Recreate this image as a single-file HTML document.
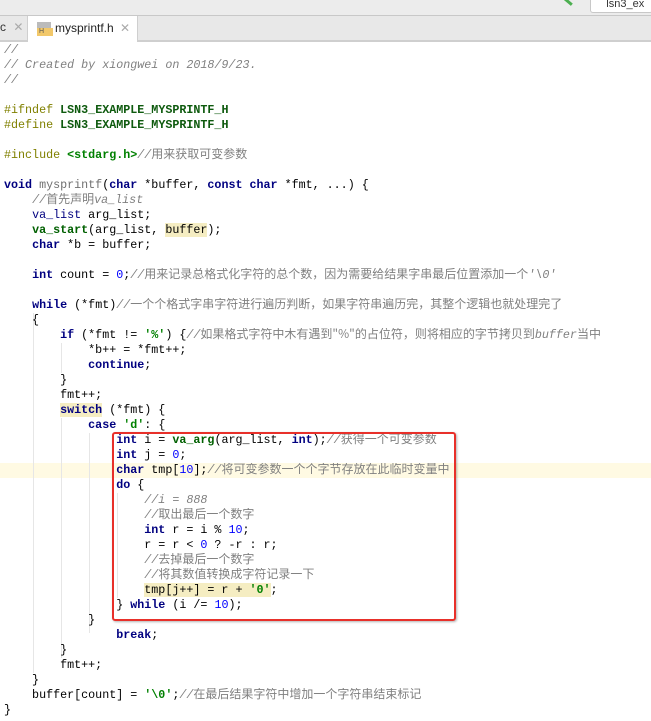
<!DOCTYPE html>
<html><head><meta charset="utf-8"><style>
body{margin:0;width:651px;height:721px;overflow:hidden;background:#fff;position:relative;font-family:"Liberation Mono","Noto Sans CJK SC",monospace;font-size:11.7px;color:#000}
.top{position:absolute;left:0;top:0;width:651px;height:15px;background:#ececec;border-bottom:1px solid #c8c8c8}
.tabs{position:absolute;left:0;top:16px;width:651px;height:24px;background:#e8e8e8;border-bottom:2px solid #cfcfcf}
.tab{position:absolute;top:16px;left:27px;width:109px;height:26px;background:#fff;border-left:1px solid #cfcfcf;border-right:1px solid #cfcfcf;font-family:"Liberation Sans",sans-serif;font-size:12px}
.l{position:absolute;left:4px;height:15px;line-height:15px;white-space:pre;right:0;overflow:hidden}
.k{color:#000080;font-weight:bold}
.c{color:#808080;font-style:italic}
.z{font-family:"Noto Sans CJK SC",sans-serif;font-style:normal;font-size:12px;line-height:0;color:#808080}
.m{color:#0e5a0e;font-weight:bold}
.n{color:#0000ff}
.s{color:#008000;font-weight:bold}
.g{color:#808000}
.hl{background:#f5edc2}
.guide{position:absolute;width:1px;background:#e6e6e6}
</style></head><body>
<div class="top"></div>
<div style="position:absolute;left:590px;top:0;width:61px;height:12px;background:#fff;border:1px solid #c8c8c8;border-top:none;border-radius:0 0 3px 3px;font-family:'Liberation Sans';font-size:11px;line-height:8px;color:#333;overflow:hidden">&nbsp;&nbsp;&nbsp;&nbsp;&nbsp;lsn3_ex</div>
<div style="position:absolute;left:563px;top:0;width:10px;height:3px;background:#4caf50;transform:rotate(40deg)"></div>
<div class="tabs"></div>
<div style="position:absolute;left:0;top:20px;font-family:'Liberation Sans';font-size:12px;color:#333">c <span style="color:#aaa;margin-left:4px">✕</span></div>
<div class="tab"><div style="position:absolute;left:9px;top:6px;width:14px;height:8px;background:#bbb"></div><div style="position:absolute;left:9px;top:12px;width:16px;height:8px;background:#f2c86a;font-size:7px;line-height:8px;color:#555;padding-left:2px;box-sizing:border-box">H</div><span style="position:absolute;left:27px;top:5px;color:#222">mysprintf.h</span><span style="position:absolute;left:92px;top:5px;color:#aaa">✕</span></div>
<div style="position:absolute;left:0;top:463px;width:651px;height:15px;background:#fffae3"></div>
<div class="guide" style="left:33px;top:313px;height:360px"></div>
<div class="guide" style="left:61px;top:343px;height:30px"></div>
<div class="guide" style="left:61px;top:418px;height:240px"></div>
<div class="guide" style="left:89px;top:433px;height:200px"></div>
<div class="guide" style="left:117px;top:493px;height:105px"></div>
<div class="l" style="top:43px"><span class="c">//</span></div>
<div class="l" style="top:58px"><span class="c">// Created by xiongwei on 2018/9/23.</span></div>
<div class="l" style="top:73px"><span class="c">//</span></div>
<div class="l" style="top:103px"><span class="g">#ifndef</span> <span class="m">LSN3_EXAMPLE_MYSPRINTF_H</span></div>
<div class="l" style="top:118px"><span class="g">#define</span> <span class="m">LSN3_EXAMPLE_MYSPRINTF_H</span></div>
<div class="l" style="top:148px"><span class="g">#include</span> <span class="s">&lt;stdarg.h&gt;</span><span class="c">//<span class="z">用来获取可变参数</span></span></div>
<div class="l" style="top:178px"><span class="k">void</span> <span style="color:#707070">mysprintf</span>(<span class="k">char</span> *buffer, <span class="k">const char</span> *fmt, ...) {</div>
<div class="l" style="top:193px">    <span class="c">//<span class="z">首先声明</span>va_list</span></div>
<div class="l" style="top:208px">    <span style="color:#000080">va_list</span> arg_list;</div>
<div class="l" style="top:223px">    <span class="m" style="color:#006000">va_start</span>(arg_list, <span class="hl">buffer</span>);</div>
<div class="l" style="top:238px">    <span class="k">char</span> *b = buffer;</div>
<div class="l" style="top:268px">    <span class="k">int</span> count = <span class="n">0</span>;<span class="c">//<span class="z">用来记录总格式化字符的总个数，因为需要给结果字串最后位置添加一个</span>'\0'</span></div>
<div class="l" style="top:298px">    <span class="k">while</span> (*fmt)<span class="c">//<span class="z">一个个格式字串字符进行遍历判断，如果字符串遍历完，其整个逻辑也就处理完了</span></span></div>
<div class="l" style="top:313px">    {</div>
<div class="l" style="top:328px">        <span class="k">if</span> (*fmt != <span class="s">'%'</span>) {<span class="c">//<span class="z">如果格式字符中木有遇到"%"的占位符，则将相应的字节拷贝到</span>buffer<span class="z">当中</span></span></div>
<div class="l" style="top:343px">            *b++ = *fmt++;</div>
<div class="l" style="top:358px">            <span class="k">continue</span>;</div>
<div class="l" style="top:373px">        }</div>
<div class="l" style="top:388px">        fmt++;</div>
<div class="l" style="top:403px">        <span class="k hl">switch</span> (*fmt) {</div>
<div class="l" style="top:418px">            <span class="k">case</span> <span class="s">'d'</span>: {</div>
<div class="l" style="top:433px">                <span class="k">int</span> i = <span class="m" style="color:#006000">va_arg</span>(arg_list, <span class="k">int</span>);<span class="c">//<span class="z">获得一个可变参数</span></span></div>
<div class="l" style="top:448px">                <span class="k">int</span> j = <span class="n">0</span>;</div>
<div class="l" style="top:463px">                <span class="k">char</span> tmp[<span class="n">10</span>];<span class="c">//<span class="z">将可变参数一个个字节存放在此临时变量中</span></span></div>
<div class="l" style="top:478px">                <span class="k">do</span> {</div>
<div class="l" style="top:493px">                    <span class="c">//i = 888</span></div>
<div class="l" style="top:508px">                    <span class="c">//<span class="z">取出最后一个数字</span></span></div>
<div class="l" style="top:523px">                    <span class="k">int</span> r = i % <span class="n">10</span>;</div>
<div class="l" style="top:538px">                    r = r &lt; <span class="n">0</span> ? -r : r;</div>
<div class="l" style="top:553px">                    <span class="c">//<span class="z">去掉最后一个数字</span></span></div>
<div class="l" style="top:568px">                    <span class="c">//<span class="z">将其数值转换成字符记录一下</span></span></div>
<div class="l" style="top:583px">                    <span class="hl">tmp[j++] = r + <span class="s">'0'</span></span>;</div>
<div class="l" style="top:598px">                } <span class="k">while</span> (i /= <span class="n">10</span>);</div>
<div class="l" style="top:613px">            }</div>
<div class="l" style="top:628px">                <span class="k">break</span>;</div>
<div class="l" style="top:643px">        }</div>
<div class="l" style="top:658px">        fmt++;</div>
<div class="l" style="top:673px">    }</div>
<div class="l" style="top:688px">    buffer[count] = <span class="s">'\0'</span>;<span class="c">//<span class="z">在最后结果字符中增加一个字符串结束标记</span></span></div>
<div class="l" style="top:703px">}</div>
<div style="position:absolute;left:112px;top:432px;width:340px;height:185px;border:2px solid #e8302a;border-radius:3px;box-shadow:1px 1px 2px rgba(0,0,0,.3)"></div>
</body></html>
